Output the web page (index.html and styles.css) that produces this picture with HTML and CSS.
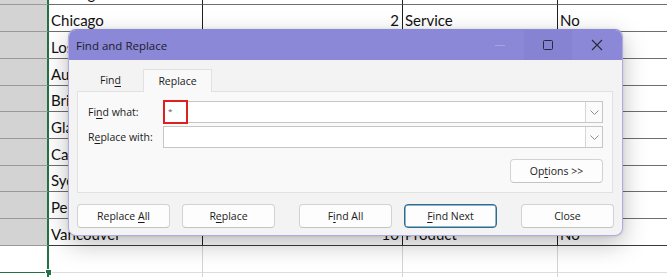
FILE: index.html
```html
<!DOCTYPE html>
<html>
<head>
<meta charset="utf-8">
<link rel="stylesheet" href="styles.css">
</head>
<body>
<div class="sheet">
  <div class="row data"><div class="hd"></div><div class="c">Chicago</div><div class="c num"></div><div class="c"></div><div class="c"></div></div>
  <div class="row data"><div class="hd"></div><div class="c">Chicago</div><div class="c num">2</div><div class="c">Service</div><div class="c">No</div></div>
  <div class="row data"><div class="hd"></div><div class="c">Los Angeles</div><div class="c num">5</div><div class="c">Product</div><div class="c">Yes</div></div>
  <div class="row data"><div class="hd"></div><div class="c">Austin</div><div class="c num">7</div><div class="c">Service</div><div class="c">No</div></div>
  <div class="row data short"><div class="hd"></div><div class="c">Brisbane</div><div class="c num">3</div><div class="c">Product</div><div class="c">Yes</div></div>
  <div class="row data"><div class="hd"></div><div class="c">Glasgow</div><div class="c num">8</div><div class="c">Service</div><div class="c">No</div></div>
  <div class="row data"><div class="hd"></div><div class="c">Calgary</div><div class="c num">4</div><div class="c">Product</div><div class="c">Yes</div></div>
  <div class="row data short"><div class="hd"></div><div class="c">Sydney</div><div class="c num">6</div><div class="c">Service</div><div class="c">No</div></div>
  <div class="row data"><div class="hd"></div><div class="c">Perth</div><div class="c num">9</div><div class="c">Product</div><div class="c">Yes</div></div>
  <div class="row data last"><div class="hd"></div><div class="c">Vancouver</div><div class="c num">10</div><div class="c">Product</div><div class="c">No</div></div>
  <div class="row empty"><div class="hd edge"><span class="handle"></span></div><div class="c"></div><div class="c"></div><div class="c"></div><div class="c"></div></div>
  <div class="row empty"><div class="hd"></div><div class="c"></div><div class="c"></div><div class="c"></div><div class="c"></div></div>
</div>

<div class="dialog">
  <div class="titlebar">
    <div class="title">Find and Replace</div>
    <div class="ctl">
      <svg width="12" height="12" viewBox="0 0 12 12"><path d="M1 6.5H11" stroke="#a9a6df" stroke-width="1"/></svg>
    </div>
    <div class="ctl hover">
      <svg width="12" height="12" viewBox="0 0 12 12"><rect x="1.5" y="1.5" width="9" height="9" rx="1" fill="none" stroke="#2a2a3a" stroke-width="1"/></svg>
    </div>
    <div class="ctl close">
      <svg width="12" height="12" viewBox="0 0 12 12"><path d="M1 1L11 11M11 1L1 11" stroke="#2a2a3a" stroke-width="1.1"/></svg>
    </div>
  </div>
  <div class="body">
    <div class="tabs">
      <div class="tab">Fin<u>d</u></div>
      <div class="tab active">Replace</div>
    </div>
    <div class="panel">
      <div class="field">
        <div class="label">Fi<u>n</u>d what:</div>
        <div class="combo">
          <span class="val">*</span>
          <span class="drop"><svg width="9" height="5" viewBox="0 0 9 5"><path d="M0.5 0.5L4.5 4.5L8.5 0.5" fill="none" stroke="#8c8c8c" stroke-width="1"/></svg></span>
          <span class="mark"></span>
        </div>
      </div>
      <div class="field">
        <div class="label">R<u>e</u>place with:</div>
        <div class="combo">
          <span class="val"></span>
          <span class="drop"><svg width="9" height="5" viewBox="0 0 9 5"><path d="M0.5 0.5L4.5 4.5L8.5 0.5" fill="none" stroke="#8c8c8c" stroke-width="1"/></svg></span>
        </div>
      </div>
      <div class="opts-row">
        <div class="btn"><span>Op<u>t</u>ions &gt;&gt;</span></div>
      </div>
    </div>
    <div class="buttons">
      <div class="btn"><span>Replace <u>A</u>ll</span></div>
      <div class="btn sm"><span>R<u>e</u>place</span></div>
      <div class="btn lg"><span>F<u>i</u>nd All</span></div>
      <div class="btn sm focus"><span><u>F</u>ind Next</span></div>
      <div class="btn lg"><span>Close</span></div>
    </div>
  </div>
</div>
</body>
</html>
```

FILE: styles.css
```css
html, body {
  margin: 0;
  padding: 0;
  background: #ffffff;
  overflow: hidden;
}

.sheet {
  margin-top: -22px;
  height: 299px;
  overflow: hidden;
  font-family: "Lato", "Liberation Sans", sans-serif;
  font-size: 15px;
  color: #111;
}

.row {
  display: grid;
  grid-template-columns: 49px 154px 200px 155px 1fr;
  height: 27px;
}
.row.short { height: 26px; }

.hd, .c {
  box-sizing: border-box;
  border-bottom: 1px solid #6e6e6e;
}

.hd {
  background: #d3d3d3;
  border-right: 2px solid #217346;
  border-bottom-color: #9a9a9a;
  position: relative;
}

.c {
  border-right: 1px solid #1e1e1e;
  display: flex;
  align-items: flex-end;
  padding: 0 3px 2px 2px;
  line-height: 18px;
  white-space: nowrap;
  overflow: hidden;
}
.c.num { justify-content: flex-end; }
.c:last-child { border-right: none; }

.row.last .c { border-bottom-color: #3a3a3a; }

.row.empty .hd {
  background: #ffffff;
  border-bottom-color: #dedede;
}
.row.empty .hd.edge { border-bottom-color: #217346; }
.row.empty .c {
  border-bottom-color: #dcdcdc;
  border-right-color: #d4d4d4;
}

.handle {
  position: absolute;
  right: -4px;
  bottom: -3px;
  width: 5px;
  height: 5px;
  background: #217346;
  box-shadow: 0 0 0 1px #ffffff;
}

/* Dialog */
.dialog {
  position: absolute;
  left: 68px;
  top: 29px;
  width: 555px;
  height: 207px;
  box-sizing: border-box;
  border: 1px solid #aeaae4;
  border-top-color: #8b88d7;
  border-radius: 8px;
  background: #f3f3f3;
  overflow: hidden;
  display: flex;
  flex-direction: column;
  font-family: "Open Sans", "Noto Sans", sans-serif;
  font-size: 10.5px;
  color: #1b1b1b;
  box-shadow: 0 8px 24px rgba(0, 0, 0, 0.26), 0 0 3px rgba(0, 0, 0, 0.12);
}

.titlebar {
  height: 30px;
  flex: none;
  background: #8b88d7;
  display: flex;
  align-items: center;
}
.title {
  flex: 1;
  padding-left: 7px;
  font-size: 11.5px;
  color: #1c1c2a;
}
.ctl {
  width: 48px;
  height: 30px;
  display: flex;
  align-items: center;
  justify-content: center;
}
.ctl.hover { background: rgba(40, 30, 110, 0.05); }
.ctl.close { width: 50px; }

.body {
  flex: 1;
  padding: 9px 9px 7px 8px;
  display: flex;
  flex-direction: column;
}

.tabs {
  display: flex;
  height: 22px;
  margin-left: 1px;
}
.tab {
  width: 65px;
  text-align: center;
  line-height: 22px;
}
.tab.active {
  width: 69px;
  height: 23px;
  box-sizing: border-box;
  background: #f9f9f9;
  border: 1px solid #e1e1e1;
  border-bottom: none;
  position: relative;
  z-index: 1;
}

.panel {
  height: 102px;
  box-sizing: border-box;
  border: 1px solid #e1e1e1;
  background: #f9f9f9;
  padding: 9px 9px 9px 10px;
}

.field {
  display: flex;
  align-items: center;
  height: 22px;
}
.field + .field { margin-top: 3px; }
.label { width: 75px; }

.combo {
  flex: 1;
  height: 22px;
  box-sizing: border-box;
  border: 1px solid #c6c6c6;
  background: #ffffff;
  display: flex;
  position: relative;
}
.val {
  flex: 1;
  padding-left: 4px;
  line-height: 18px;
  font-size: 8px;
  color: #555;
}
.drop {
  width: 17px;
  box-sizing: border-box;
  border-left: 1px solid #d6d6d6;
  background: #fbfbfb;
  display: flex;
  align-items: center;
  justify-content: center;
}
.mark {
  position: absolute;
  left: -1px;
  top: -2px;
  width: 25px;
  height: 24px;
  box-sizing: border-box;
  border: 2px solid #e0201e;
}

.opts-row {
  display: flex;
  justify-content: flex-end;
  margin-top: 11px;
}

.btn {
  width: 93px;
  height: 24px;
  box-sizing: border-box;
  border: 1px solid #d2d2d2;
  border-bottom-color: #c4c4c4;
  border-radius: 4px;
  background: #fdfdfd;
  display: flex;
  align-items: center;
  justify-content: center;
  flex: none;
  white-space: nowrap;
}
.btn.focus {
  border: 1px solid #2a6c92;
  box-shadow: inset 0 0 0 0.5px #2a6c92;
}

.buttons {
  display: flex;
  margin-top: 11px;
}
.btn.sm { margin-left: 12px; }
.btn.lg { margin-left: 24px; }

u {
  text-decoration-thickness: 1px;
  text-underline-offset: 1.5px;
}
```
